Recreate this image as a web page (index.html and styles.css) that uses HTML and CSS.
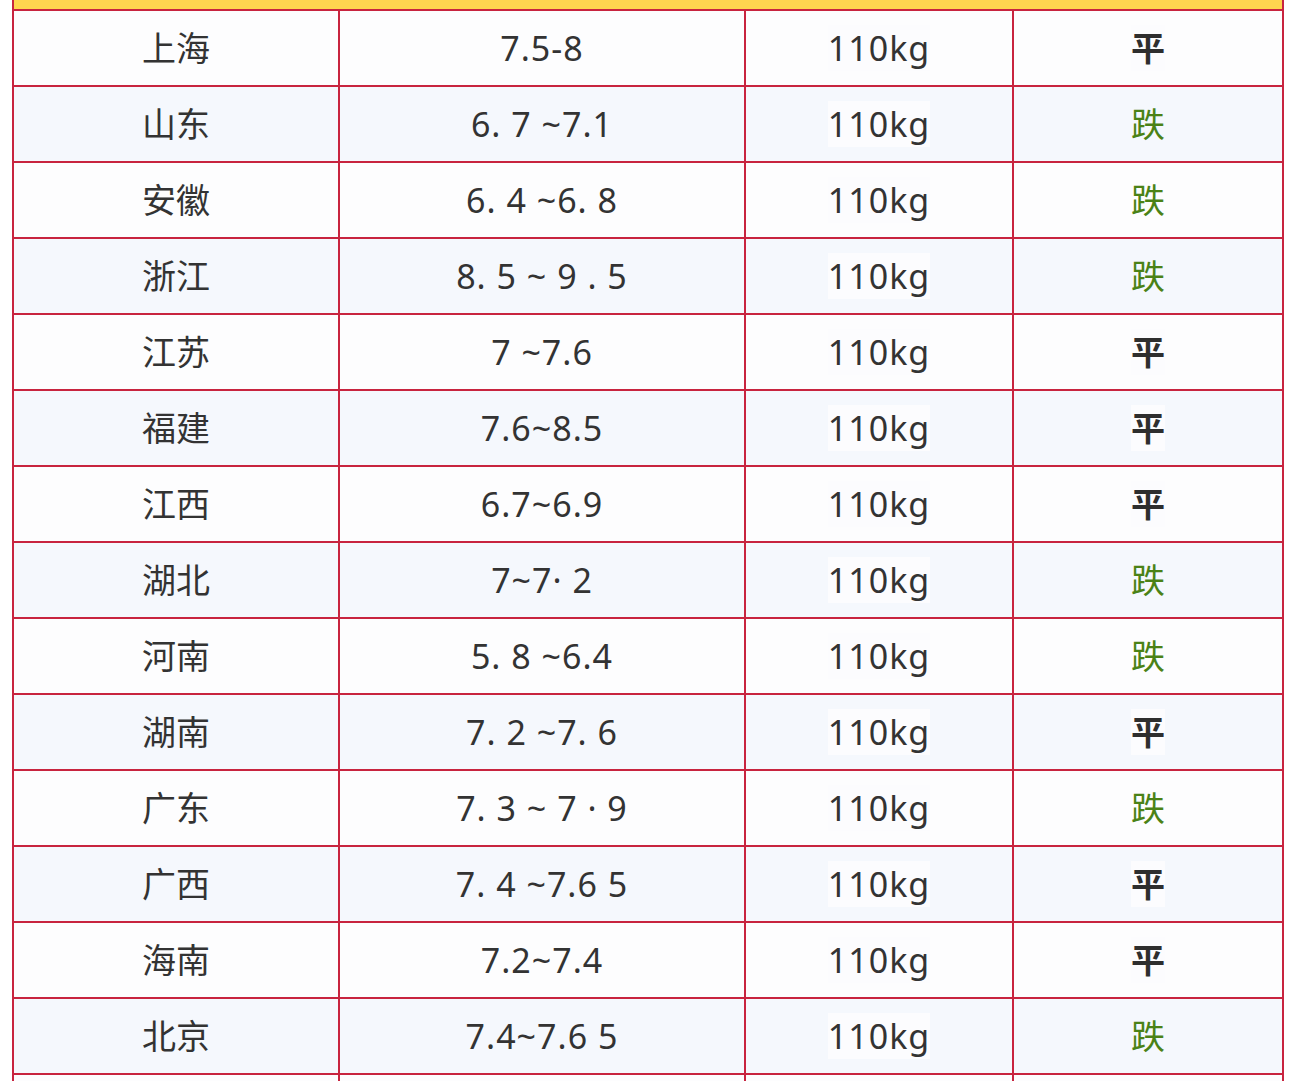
FILE: index.html
```html
<!DOCTYPE html>
<html lang="zh">
<head>
<meta charset="utf-8">
<title>生猪价格</title>
<link rel="stylesheet" href="styles.css">
</head>
<body>
<table class="price-table">
  <colgroup>
    <col class="c-region">
    <col class="c-price">
    <col class="c-weight">
    <col class="c-trend">
  </colgroup>
  <thead>
    <tr class="head-row"><th colspan="4"></th></tr>
  </thead>
  <tbody>
    <tr><td>上海</td><td class="num">7.5-8</td><td class="num"><span class="hl">110kg</span></td><td><span class="flat">平</span></td></tr>
    <tr><td>山东</td><td class="num">6. 7 ~7.1</td><td class="num"><span class="hl">110kg</span></td><td><span class="down">跌</span></td></tr>
    <tr><td>安徽</td><td class="num">6. 4 ~6. 8</td><td class="num"><span class="hl">110kg</span></td><td><span class="down">跌</span></td></tr>
    <tr><td>浙江</td><td class="num">8. 5 ~ 9 . 5</td><td class="num"><span class="hl">110kg</span></td><td><span class="down">跌</span></td></tr>
    <tr><td>江苏</td><td class="num">7 ~7.6</td><td class="num"><span class="hl">110kg</span></td><td><span class="flat">平</span></td></tr>
    <tr><td>福建</td><td class="num">7.6~8.5</td><td class="num"><span class="hl">110kg</span></td><td><span class="flat">平</span></td></tr>
    <tr><td>江西</td><td class="num">6.7~6.9</td><td class="num"><span class="hl">110kg</span></td><td><span class="flat">平</span></td></tr>
    <tr><td>湖北</td><td class="num">7~7· 2</td><td class="num"><span class="hl">110kg</span></td><td><span class="down">跌</span></td></tr>
    <tr><td>河南</td><td class="num">5. 8 ~6.4</td><td class="num"><span class="hl">110kg</span></td><td><span class="down">跌</span></td></tr>
    <tr><td>湖南</td><td class="num">7. 2 ~7. 6</td><td class="num"><span class="hl">110kg</span></td><td><span class="flat">平</span></td></tr>
    <tr><td>广东</td><td class="num">7. 3 ~ 7 · 9</td><td class="num"><span class="hl">110kg</span></td><td><span class="down">跌</span></td></tr>
    <tr><td>广西</td><td class="num">7. 4 ~7.6 5</td><td class="num"><span class="hl">110kg</span></td><td><span class="flat">平</span></td></tr>
    <tr><td>海南</td><td class="num">7.2~7.4</td><td class="num"><span class="hl">110kg</span></td><td><span class="flat">平</span></td></tr>
    <tr><td>北京</td><td class="num">7.4~7.6 5</td><td class="num"><span class="hl">110kg</span></td><td><span class="down">跌</span></td></tr>
    <tr class="tail-row"><td></td><td></td><td></td><td></td></tr>
  </tbody>
</table>
</body>
</html>
```
FILE: styles.css
```css
html, body {
  margin: 0;
  padding: 0;
  background: #ffffff;
}

body {
  padding: 0 12px;
  font-family: "Noto Sans", "Noto Sans CJK SC", sans-serif;
  color: #333333;
}

.price-table {
  width: 1270px;
  border-collapse: collapse;
  table-layout: fixed;
}

.c-region { width: 326px; }
.c-price { width: 406px; }
.c-weight { width: 268px; }
.c-trend { width: 270px; }

.head-row th {
  height: 9px;
  padding: 0;
  background: #ffd54f;
  border: 2px solid #c8243f;
  border-top: none;
}

.price-table td {
  height: 74px;
  padding: 0;
  text-align: center;
  vertical-align: middle;
  border: 2px solid #c8243f;
  font-size: 34px;
  line-height: 40px;
  white-space: pre;
  background: #fdfdfe;
}

.price-table tbody tr:nth-child(even) td {
  background: #f5f8fd;
}

.num {
  letter-spacing: 1px;
}

.hl {
  background: #fcfcfe;
}

.flat {
  font-weight: 700;
  color: #2e2e2e;
  background: #fcfcfe;
}

.down {
  color: #4b8216;
}
```
